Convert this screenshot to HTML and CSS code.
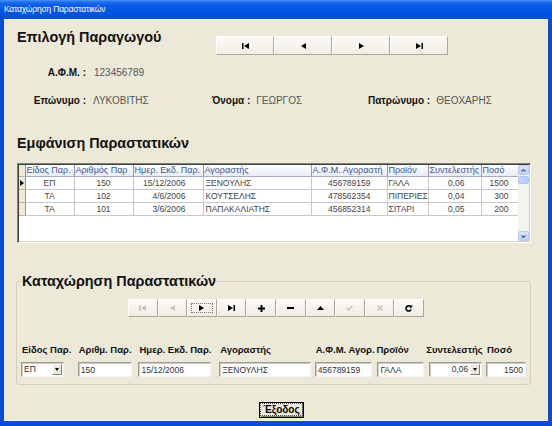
FILE: index.html
```html
<!DOCTYPE html>
<html lang="el">
<head>
    <meta charset="UTF-8">
    <title>Καταχώρηση Παραστατικών</title>
    <link rel="stylesheet" href="styles.css">
</head>
<body>
<div class="window">
    <div class="titlebar">Καταχώρηση Παραστατικών</div>
    <div class="client">

        <div class="top">
            <h1 class="heading heading-top">Επιλογή Παραγωγού</h1>
            <div class="navigator nav-big">
                <button><svg width="7" height="6" viewBox="0 0 7 6"><rect x="0" y="0" width="1.5" height="6"/><polygon points="7,0 2,3 7,6"/></svg></button>
                <button><svg width="5" height="6" viewBox="0 0 5 6"><polygon points="5,0 0,3 5,6"/></svg></button>
                <button><svg width="5" height="6" viewBox="0 0 5 6"><polygon points="0,0 5,3 0,6"/></svg></button>
                <button><svg width="7" height="6" viewBox="0 0 7 6"><polygon points="0,0 5,3 0,6"/><rect x="5.5" y="0" width="1.5" height="6"/></svg></button>
            </div>
        </div>

        <div class="info-row row-afm">
            <span class="lbl lbl-first">Α.Φ.Μ. :</span>
            <span class="val">123456789</span>
        </div>
        <div class="info-row row-names">
            <span class="lbl lbl-first">Επώνυμο :</span>
            <span class="val val-surname">ΛΥΚΟΒΙΤΗΣ</span>
            <span class="pair pair-name">
                <span class="lbl">Όνομα :</span>
                <span class="val">ΓΕΩΡΓΟΣ</span>
            </span>
            <span class="pair">
                <span class="lbl">Πατρώνυμο :</span>
                <span class="val">ΘΕΟΧΑΡΗΣ</span>
            </span>
        </div>

        <h2 class="heading heading-grid">Εμφάνιση Παραστατικών</h2>

        <div class="grid">
            <div class="grid-body">
                <table>
                    <colgroup>
                        <col style="width:6px">
                        <col style="width:49px">
                        <col style="width:59px">
                        <col style="width:70px">
                        <col style="width:108px">
                        <col style="width:76px">
                        <col style="width:41px">
                        <col style="width:53px">
                        <col style="width:37px">
                    </colgroup>
                    <thead>
                        <tr>
                            <th class="ind"></th>
                            <th>Είδος Παρ.</th>
                            <th>Αριθμός Παρ</th>
                            <th>Ημερ. Εκδ. Παρ.</th>
                            <th>Αγοραστής</th>
                            <th>Α.Φ.Μ. Αγοραστή</th>
                            <th>Προϊόν</th>
                            <th>Συντελεστής</th>
                            <th>Ποσό</th>
                        </tr>
                    </thead>
                    <tbody>
                        <tr>
                            <td class="ind"><span class="arrow"></span></td>
                            <td class="c">ΕΠ</td>
                            <td class="c">150</td>
                            <td class="date">15/12/2006</td>
                            <td>ΞΕΝΟΥΛΗΣ</td>
                            <td class="afm">456789159</td>
                            <td class="prod">ΓΑΛΑ</td>
                            <td class="rate">0,06</td>
                            <td class="amount">1500</td>
                        </tr>
                        <tr>
                            <td class="ind"></td>
                            <td class="c">ΤΑ</td>
                            <td class="c">102</td>
                            <td class="date">4/6/2006</td>
                            <td>ΚΟΥΤΣΕΛΗΣ</td>
                            <td class="afm">478562354</td>
                            <td class="prod">ΠΙΠΕΡΙΕΣ</td>
                            <td class="rate">0,04</td>
                            <td class="amount">300</td>
                        </tr>
                        <tr>
                            <td class="ind"></td>
                            <td class="c">ΤΑ</td>
                            <td class="c">101</td>
                            <td class="date">3/6/2006</td>
                            <td>ΠΑΠΑΚΑΛΙΑΤΗΣ</td>
                            <td class="afm">456852314</td>
                            <td class="prod">ΣΙΤΑΡΙ</td>
                            <td class="rate">0,05</td>
                            <td class="amount">200</td>
                        </tr>
                    </tbody>
                </table>
            </div>
            <div class="scrollbar">
                <div class="sb-btn"><svg width="5" height="3" viewBox="0 0 5 3"><polyline points="0.5,2.5 2.5,0.5 4.5,2.5"/></svg></div>
                <div class="sb-thumb"></div>
                <div class="sb-track"></div>
                <div class="sb-btn"><svg width="5" height="3" viewBox="0 0 5 3"><polyline points="0.5,0.5 2.5,2.5 4.5,0.5"/></svg></div>
            </div>
        </div>

        <fieldset class="entry">
            <legend>Καταχώρηση Παραστατικών</legend>

            <div class="navigator nav-small">
                <button class="off"><svg width="7" height="6" viewBox="0 0 7 6"><rect x="0" y="0" width="1.5" height="6"/><polygon points="7,0 2,3 7,6"/></svg></button>
                <button class="off"><svg width="5" height="6" viewBox="0 0 5 6"><polygon points="5,0 0,3 5,6"/></svg></button>
                <button class="focus"><svg width="5" height="6" viewBox="0 0 5 6"><polygon points="0,0 5,3 0,6"/></svg></button>
                <button><svg width="7" height="6" viewBox="0 0 7 6"><polygon points="0,0 5,3 0,6"/><rect x="5.5" y="0" width="1.5" height="6"/></svg></button>
                <button><svg width="7" height="7" viewBox="0 0 7 7"><rect x="2.5" y="0" width="2" height="7"/><rect x="0" y="2.5" width="7" height="2"/></svg></button>
                <button><svg width="7" height="2" viewBox="0 0 7 2"><rect x="0" y="0" width="7" height="2"/></svg></button>
                <button><svg width="7" height="4" viewBox="0 0 7 4"><polygon points="0,4 3.5,0 7,4"/></svg></button>
                <button class="off"><svg width="7" height="6" viewBox="0 0 7 6"><polyline points="0.5,3 2.5,5 6.5,1" fill="none" stroke="#c6c3b6" stroke-width="1.5"/></svg></button>
                <button class="off"><svg width="6" height="6" viewBox="0 0 6 6"><path d="M0.5 0.5 L5.5 5.5 M5.5 0.5 L0.5 5.5" stroke="#c6c3b6" stroke-width="1.3"/></svg></button>
                <button><svg width="8" height="7" viewBox="0 0 8 7"><path d="M6 4.5 A2.6 2.6 0 1 1 5.2 1.4" fill="none" stroke="#000" stroke-width="1.6"/><polygon points="4,0 8,0.8 5.5,3.6"/></svg></button>
            </div>

            <div class="fields">
                <div class="field f-type">
                    <label>Είδος Παρ.</label>
                    <div class="combo combo-type"><span class="combo-text">ΕΠ</span><span class="drop"></span></div>
                </div>
                <div class="field f-num">
                    <label>Αριθμ. Παρ.</label>
                    <input class="edit w-num" type="text" value="150">
                </div>
                <div class="field f-date">
                    <label>Ημερ. Εκδ. Παρ.</label>
                    <input class="edit w-date" type="text" value="15/12/2006">
                </div>
                <div class="field f-buyer">
                    <label>Αγοραστής</label>
                    <input class="edit w-buyer" type="text" value="ΞΕΝΟΥΛΗΣ">
                </div>
                <div class="field f-afm">
                    <label>Α.Φ.Μ. Αγορ.</label>
                    <input class="edit w-afm" type="text" value="456789159">
                </div>
                <div class="field f-product">
                    <label>Προϊόν</label>
                    <input class="edit w-product" type="text" value="ΓΑΛΑ">
                </div>
                <div class="field f-rate">
                    <label>Συντελεστής</label>
                    <div class="combo combo-rate"><span class="combo-text">0,06</span><span class="drop"></span></div>
                </div>
                <div class="field f-amount">
                    <label>Ποσό</label>
                    <input class="edit w-amount" type="text" value="1500">
                </div>
            </div>
        </fieldset>

        <div class="footer">
            <button class="exit"><span>Έξοδος</span></button>
        </div>
    </div>
</div>
</body>
</html>
```

FILE: styles.css
```css
* {
    box-sizing: border-box;
}
body {
    margin: 0;
    width: 552px;
    height: 426px;
    overflow: hidden;
    font-family: "Liberation Sans", Arial, sans-serif;
    background: #0b4bd6;
}
.window {
    width: 552px;
    height: 426px;
    display: flex;
    flex-direction: column;
    background: #0b4bd6;
}
.titlebar {
    height: 19px;
    flex-shrink: 0;
    padding-left: 4px;
    background: linear-gradient(#4a93f6 0, #1f70ef 2px, #0a5be8 5px, #0056e2 13px, #034bd2 19px);
    color: #fff;
    font-size: 8.5px;
    line-height: 19px;
    letter-spacing: -0.2px;
}
.client {
    height: 402px;
    margin: 0 4px;
    background: #ece9d8;
    border-top: 1px solid #f7f5ec;
    border-bottom: 1px solid #f7f5ec;
}

/* headings */
.heading {
    margin: 0;
    font-size: 14.4px;
    font-weight: bold;
    line-height: 18px;
    color: #111;
}
.top {
    display: flex;
    align-items: flex-start;
    padding: 8px 0 0 13px;
    height: 35px;
}
.heading-top {
    width: 199px;
}
.heading-grid {
    margin: 27px 0 0 13px;
}

/* navigators */
.navigator {
    display: flex;
}
.navigator button {
    margin: 0;
    padding: 0;
    display: flex;
    align-items: center;
    justify-content: center;
    background: linear-gradient(#fbfaf5, #efede3);
    border: 1px solid;
    border-color: #fff #aca899 #aca899 #fff;
}
.navigator svg {
    fill: #000;
}
.nav-big {
    margin-top: 8px;
}
.nav-big button {
    width: 58px;
    height: 19px;
}
.nav-small {
    margin-left: 107px;
}
.nav-small button {
    width: 29.6px;
    height: 18px;
}
.nav-small button.off svg {
    fill: #c6c3b6;
}
.nav-small button.focus {
    outline: 1px dotted #777;
    outline-offset: -5px;
}

/* producer info */
.info-row {
    display: flex;
    font-size: 10px;
    line-height: 12px;
    height: 12px;
}
.row-afm {
    margin-top: 12px;
}
.row-names {
    margin-top: 16px;
}
.lbl {
    font-weight: bold;
    color: #111;
    white-space: nowrap;
}
.lbl-first {
    width: 82px;
    text-align: right;
}
.val {
    color: #555;
}
.row-afm .val {
    margin-left: 8px;
}
.val-surname {
    margin-left: 7px;
    width: 119px;
}
.pair {
    display: flex;
    gap: 6px;
}
.pair-name {
    width: 156px;
}

/* data grid */
.grid {
    display: flex;
    margin: 11px 0 0 13px;
    width: 514px;
    height: 80px;
    border: 1px solid;
    border-color: #808080 #fff #fff #808080;
    box-shadow: inset 1px 1px #404040, inset -1px -1px #d4d0c8;
    padding: 1px;
}
.grid-body {
    width: 499px;
    height: 76px;
    background: #fff;
    overflow: hidden;
}
.grid table {
    border-collapse: collapse;
    table-layout: fixed;
    width: 499px;
    font-size: 8.5px;
}
.grid th {
    height: 11px;
    padding: 0 0 0 1px;
    font-size: 9px;
    font-weight: normal;
    text-align: left;
    color: #3b5694;
    line-height: 10px;
    white-space: nowrap;
    overflow: hidden;
    background: linear-gradient(#fdfdfe, #e9ecf6);
    border-right: 1px solid #8e9ab8;
    border-bottom: 1px solid #a4adc4;
}
.grid td {
    height: 13px;
    padding: 0 2px;
    line-height: 12px;
    color: #444;
    white-space: nowrap;
    overflow: hidden;
    border-right: 1px solid #c8c8c8;
    border-bottom: 1px solid #c8c8c8;
}
.grid .ind {
    padding: 0;
    background: #ece9d8;
    border-right: 1px solid #9a978a;
    border-bottom: 1px solid #b8b5a8;
    position: relative;
}
.arrow {
    position: absolute;
    left: 1px;
    top: 3px;
    border-left: 4px solid #000;
    border-top: 3.5px solid transparent;
    border-bottom: 3.5px solid transparent;
}
.grid td.c {
    text-align: center;
}
.grid td.date {
    text-align: right;
    padding-right: 17px;
}
.grid td.afm {
    text-align: right;
    padding-right: 16px;
}
.grid td.prod {
    padding-left: 1px;
    padding-right: 0;
}
.grid td.rate {
    text-align: right;
    padding-right: 16px;
}
.grid td.amount {
    text-align: right;
    padding-right: 9px;
}
.scrollbar {
    width: 11px;
    height: 76px;
    display: flex;
    flex-direction: column;
    background: #f4f3ee;
}
.sb-btn {
    height: 10px;
    display: flex;
    align-items: center;
    justify-content: center;
    background: linear-gradient(#dce6fd, #bccffa);
    border: 1px solid #b8c9f2;
    border-radius: 2px;
}
.sb-btn svg {
    fill: none;
    stroke: #4d6185;
    stroke-width: 1.2;
}
.sb-thumb {
    height: 8px;
    margin-top: 1px;
    background: linear-gradient(90deg, #c9d8fc, #b7cbf8);
    border: 1px solid #b0c4f0;
    border-radius: 2px;
}
.sb-track {
    flex: 1;
}

/* entry group */
.entry {
    margin: 29px 0 0 12px;
    width: 515px;
    padding: 9px 4px 7px 4px;
    border: 1px solid #d0d0bf;
    border-radius: 3px;
    min-width: 0;
}
.entry legend {
    padding: 0 1px;
    font-size: 14.4px;
    font-weight: bold;
    line-height: 18px;
    color: #111;
}
.fields {
    display: flex;
    margin-top: 27px;
}
.field {
    display: flex;
    flex-direction: column;
}
.field label {
    height: 12px;
    margin: 0 0 6px 1px;
    font-size: 9.5px;
    line-height: 12px;
    font-weight: bold;
    color: #111;
    white-space: nowrap;
}
.f-type { width: 57px; }
.f-num { width: 61px; }
.f-date { width: 81px; }
.f-buyer { width: 96px; }
.f-afm { width: 62px; }
.f-product { width: 49px; }
.f-rate { width: 61px; }
.f-amount { width: 40px; }
.f-product label {
    margin-left: 0;
}
.edit,
.combo {
    height: 15px;
    margin: 0;
    padding: 0 2px;
    font-family: "Liberation Sans", Arial, sans-serif;
    font-size: 8.5px;
    color: #333;
    background: #fff;
    border: 1px solid;
    border-color: #9c9a94 #f4f4f4 #f4f4f4 #9c9a94;
    box-shadow: inset 1px 1px #cfcdc5;
    outline: none;
}
.w-num { width: 54px; }
.w-date { width: 73px; }
.w-buyer { width: 92px; }
.w-afm { width: 57px; }
.w-product { width: 47px; margin-left: 1px; }
.w-amount { width: 40px; text-align: right; }
.combo {
    display: flex;
    align-items: center;
    padding: 0 1px 0 2px;
    line-height: 13px;
}
.combo-type {
    width: 43px;
}
.combo-rate {
    width: 53px;
    margin-left: 4px;
}
.combo-text {
    flex: 1;
}
.combo-rate .combo-text {
    text-align: right;
    padding-right: 2px;
}
.drop {
    width: 10px;
    height: 11px;
    position: relative;
    background: #ece9d8;
    border: 1px solid;
    border-color: #fff #808080 #808080 #fff;
}
.drop::after {
    content: "";
    position: absolute;
    left: 2px;
    top: 3px;
    border-top: 3px solid #000;
    border-left: 2.5px solid transparent;
    border-right: 2.5px solid transparent;
}

/* footer */
.footer {
    padding: 14px 0 0 255px;
}
.exit {
    width: 45px;
    height: 16px;
    margin: 0;
    padding: 1px;
    font-family: "Liberation Sans", Arial, sans-serif;
    font-size: 10px;
    font-weight: bold;
    color: #000;
    background: #ece9d8;
    border: 1px solid #000;
    box-shadow: inset 1px 1px #fff, inset -1px -1px #808080;
}
.exit span {
    display: block;
    line-height: 11px;
    outline: 1px dotted #444;
    outline-offset: 0;
}
```
